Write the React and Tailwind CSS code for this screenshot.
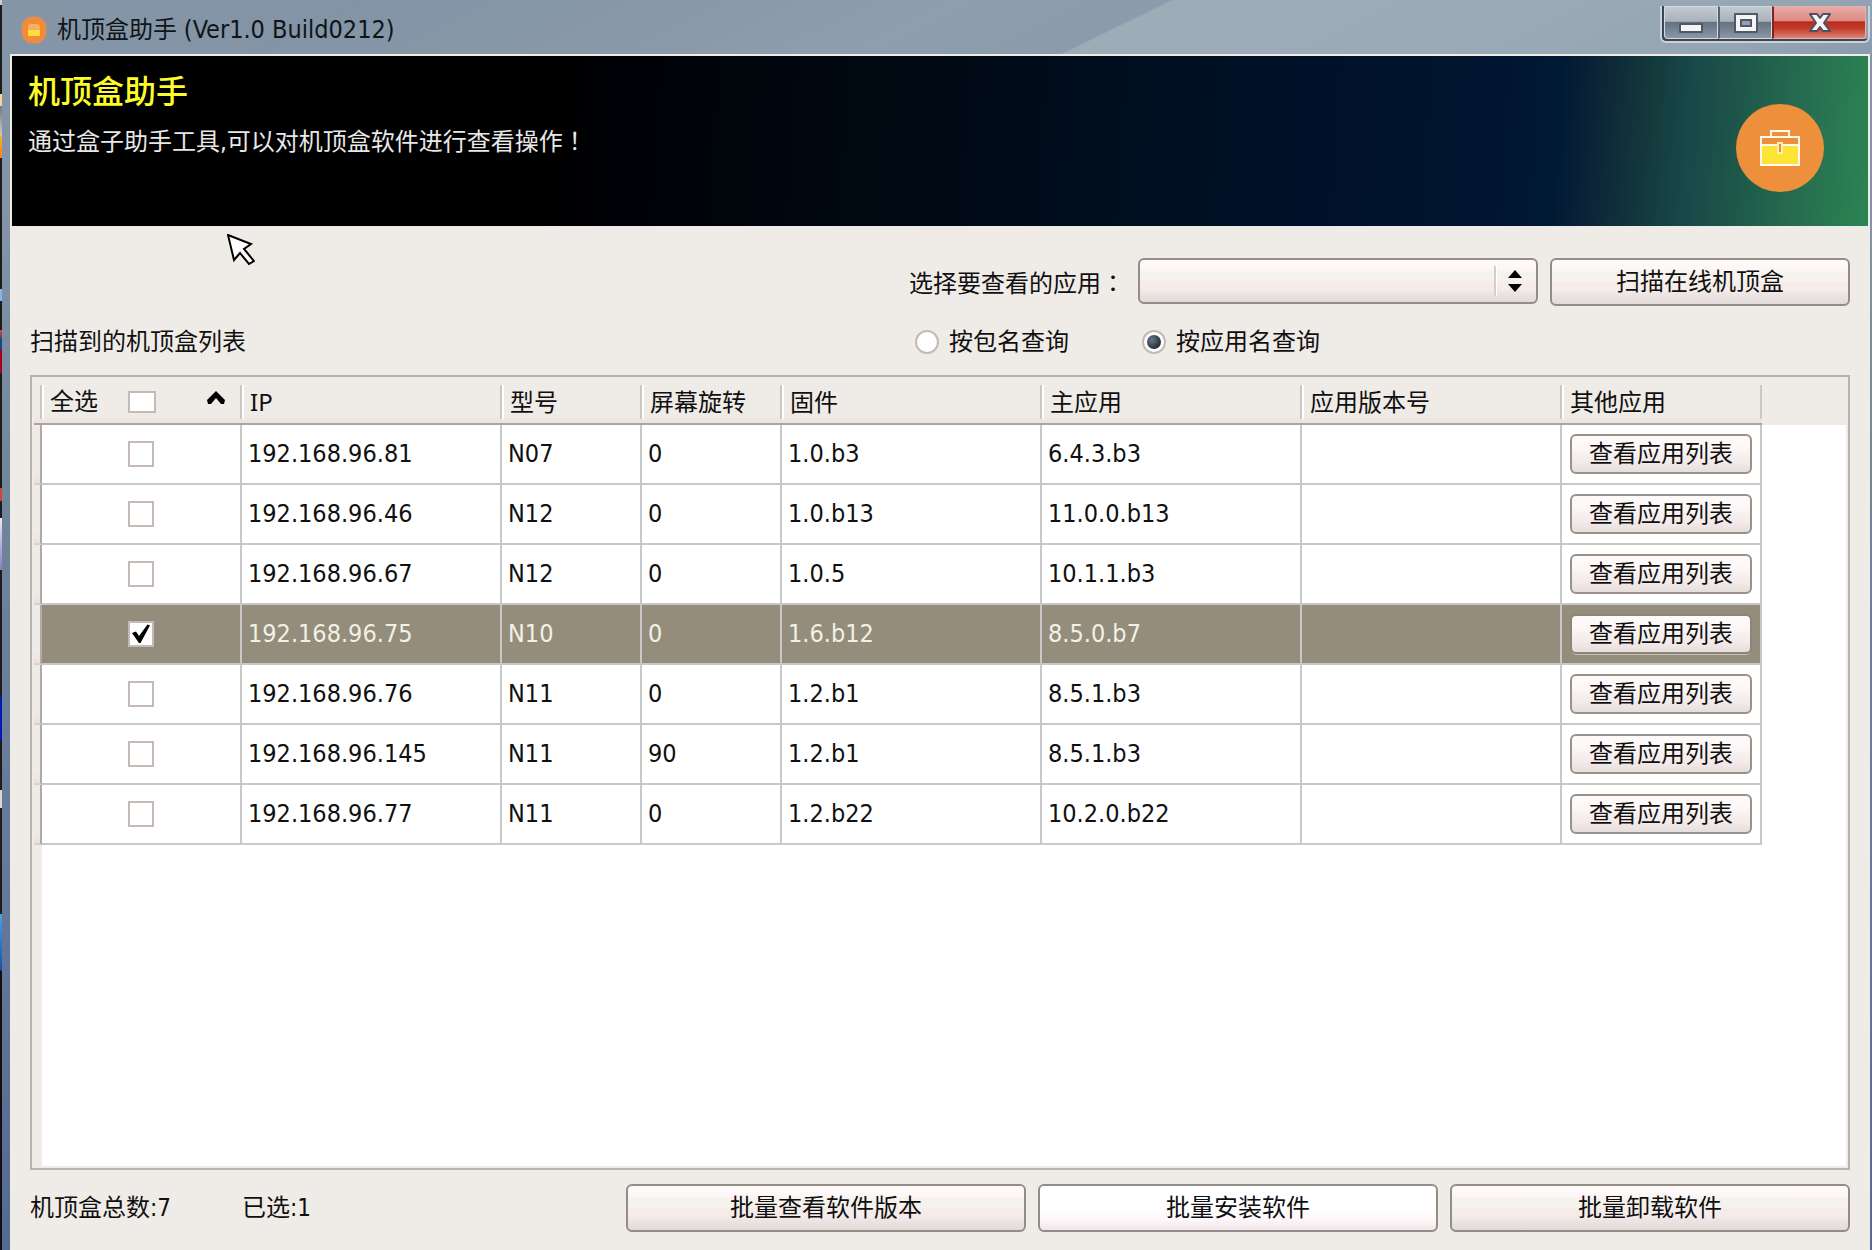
import { useState } from "react";

const BOXES = [
  { ip: "192.168.96.81", model: "N07", rotation: "0", firmware: "1.0.b3", app: "6.4.3.b3" },
  { ip: "192.168.96.46", model: "N12", rotation: "0", firmware: "1.0.b13", app: "11.0.0.b13" },
  { ip: "192.168.96.67", model: "N12", rotation: "0", firmware: "1.0.5", app: "10.1.1.b3" },
  { ip: "192.168.96.75", model: "N10", rotation: "0", firmware: "1.6.b12", app: "8.5.0.b7" },
  { ip: "192.168.96.76", model: "N11", rotation: "0", firmware: "1.2.b1", app: "8.5.1.b3" },
  { ip: "192.168.96.145", model: "N11", rotation: "90", firmware: "1.2.b1", app: "8.5.1.b3" },
  { ip: "192.168.96.77", model: "N11", rotation: "0", firmware: "1.2.b22", app: "10.2.0.b22" },
];

const COLUMNS = ["IP", "型号", "屏幕旋转", "固件", "主应用", "应用版本号", "其他应用"];

// Full-width punctuation centred in its em box
function Mark({ children }) {
  return <span className="font-['Noto_Sans_CJK_TC',sans-serif]">{children}</span>;
}

function PushButton({ children, className = "", hot = false }) {
  const face = hot
    ? "bg-[linear-gradient(#ffffff_0%,#ffffff_45%,#fdf8fa_75%,#f0e6ea_100%)]"
    : "bg-[linear-gradient(#fffbfb_0%,#fdf6f6_24%,#f6f2ec_28%,#f6f2ec_48%,#f6ecec_52%,#f5ebeb_70%,#ece7e4_76%,#e3dad8_100%)]";
  return (
    <button
      type="button"
      className={`flex h-12 items-center justify-center rounded-md border-2 border-[#928d86] text-2xl leading-8 ${face} ${className}`}
    >
      {children}
    </button>
  );
}

function TickBox({ label, checked, onChange, size }) {
  return (
    <span className="grid place-items-center">
      <input
        type="checkbox"
        aria-label={label}
        checked={checked}
        onChange={onChange}
        className={`col-start-1 row-start-1 appearance-none border-2 border-[#c6bab6] bg-white ${size}`}
      />
      {checked && (
        <svg viewBox="0 0 20 22" className="pointer-events-none col-start-1 row-start-1 h-[22px] w-5" aria-hidden="true">
          <path d="M1 10 L5 8.5 L8 13 L16.5 1.5 L19 2.5 L9.5 20 L8 20 Z" fill="#000" />
        </svg>
      )}
    </span>
  );
}

function TitleBar() {
  return (
    <header className="flex h-[54px] items-start justify-between bg-[linear-gradient(154deg,#8496a6_0px,#8294a6_160px,#8898a8_300px,#8f9eae_420px,#8b9bab_512px,#9eacb8_514px,#9aaab6_680px,#94a5b3_800px,#8c9cb0_860px)] pr-[2px]">
      <div className="flex items-center gap-2.5 pl-[19px] pt-3">
        <svg viewBox="0 0 26 28" className="h-7 w-[26px]" aria-hidden="true">
          <rect x="1" y="1" width="24" height="26" rx="10" fill="#f08c38" stroke="#d8905c" />
          <rect x="7" y="8" width="12" height="7" rx="3" fill="#f5b060" />
          <rect x="7" y="14" width="12" height="6" fill="#ffdc3c" />
        </svg>
        <h1 className="text-2xl leading-9 text-[#101418]">
          机顶盒助手 <span className="text-[25px]">(Ver1.0 Build0212)</span>
        </h1>
      </div>
      <div className="mt-[6px] flex h-[37px] rounded-b-md border-2 border-t-0 border-[#c9d2da] shadow-[inset_2px_-2px_0_#3d4650]">
        <button type="button" aria-label="最小化" className="m-[2px] mr-0 mt-0 flex w-[54px] items-center justify-center rounded-bl border border-[#d5dae0] bg-[linear-gradient(#c3c9d1_0%,#a9b1bb_46%,#66737f_50%,#8a96ab_100%)]">
          <svg viewBox="0 0 26 24" className="h-6 w-[26px]" aria-hidden="true">
            <rect x="1" y="12" width="24" height="10" rx="1" fill="#4e5868" />
            <rect x="3" y="14" width="20" height="6" fill="#f4f4f4" />
          </svg>
        </button>
        <button type="button" aria-label="最大化" className="mb-[2px] flex w-[54px] items-center justify-center border border-l-2 border-[#d5dae0] border-l-[#59636e] bg-[linear-gradient(#c3c9d1_0%,#a9b1bb_46%,#66737f_50%,#8a96ab_100%)]">
          <svg viewBox="0 0 26 24" className="h-6 w-[26px]" aria-hidden="true">
            <rect x="1" y="2" width="24" height="20" rx="1" fill="#4e5868" />
            <rect x="3" y="4" width="20" height="16" fill="#f4f4f4" />
            <rect x="7" y="8" width="12" height="8" fill="#4e5868" />
            <rect x="9" y="10" width="8" height="4" fill="#96a0b2" />
          </svg>
        </button>
        <button type="button" aria-label="关闭" className="mb-[2px] mr-[2px] flex w-[94px] items-center justify-center rounded-br border border-l-2 border-[#e6b0ac] border-l-[#7c2420] bg-[linear-gradient(#e9aaa6_0%,#dc8a84_44%,#b92c1c_48%,#c43c2c_70%,#dc8474_100%)]">
          <svg viewBox="0 0 26 24" className="h-6 w-[26px]" aria-hidden="true">
            <path d="M3 3 H10 L13 7 L16 3 H23 L17 12 L23 20 H16 L13 16 L10 20 H3 L9 12 Z" fill="#f6f4f4" stroke="#4e5060" strokeWidth="2" strokeLinejoin="round" />
          </svg>
        </button>
      </div>
    </header>
  );
}

function Banner() {
  return (
    <section className="flex h-[170px] items-center justify-between bg-[linear-gradient(94deg,#000000_0%,#000000_29%,#000107_33%,#000810_45%,#000c1a_55%,#001128_68%,#001530_80%,#001a34_83%,#0c2438_85%,#143a3c_88%,#18484a_90%,#1d5248_92%,#20604c_94%,#266c50_96%,#2c8452_100%)] pl-4 pr-11 text-white">
      <div className="self-start pt-3">
        <h2 className="text-[32px] font-medium leading-[48px] text-[#fcfc28]">机顶盒助手</h2>
        <p className="pt-[6px] text-2xl leading-9 text-[#e8e8e8]">
          通过盒子助手工具,可以对机顶盒软件进行查看操作<Mark>！</Mark>
        </p>
      </div>
      <svg viewBox="0 0 88 88" className="mt-[14px] size-[88px]" aria-hidden="true">
        <circle cx="44" cy="44" r="44" fill="#ee8f3c" />
        <path d="M35 33 V27 H53 V33" fill="none" stroke="#fff8ec" strokeWidth="2" />
        <rect x="25" y="41" width="38" height="20" fill="#ffe438" />
        <rect x="25" y="33" width="38" height="28" fill="none" stroke="#fff8ec" strokeWidth="2" />
        <path d="M25 41 H63" stroke="#fff8ec" strokeWidth="2" />
        <rect x="42" y="39" width="4" height="10" fill="#ee8f3c" stroke="#ffeeb0" strokeWidth="2" />
      </svg>
    </section>
  );
}

function Radio({ label, checked, onChange }) {
  return (
    <label className="flex items-center gap-2.5">
      <span className="grid place-items-center">
        <input
          type="radio"
          name="query"
          checked={checked}
          onChange={onChange}
          className="col-start-1 row-start-1 size-6 appearance-none rounded-full border-2 border-[#c4bab4] bg-white"
        />
        {checked && (
          <span className="pointer-events-none col-start-1 row-start-1 size-[14px] rounded-full bg-[radial-gradient(circle_at_35%_35%,#6a7884,#202a34_75%)]" />
        )}
      </span>
      {label}
    </label>
  );
}

function HeadCell({ children, last = false }) {
  return (
    <th
      scope="col"
      className="h-12 border-b-2 border-[#aaa5a0] bg-[linear-gradient(#efebe7_0%,#efebe7_80%,#ede2e0_100%)] p-0 pt-1 font-normal"
    >
      <div
        className={`-ml-[2px] flex h-[34px] items-center border-l-2 border-[#cbc7c3] shadow-[inset_2px_0_0_#ffffff] ${
          last ? "border-r-2" : ""
        }`}
      >
        {children}
      </div>
    </th>
  );
}

function BoxTable({ selected, toggle, toggleAll }) {
  const cell = "h-[60px] border-b-2 border-r-2 border-[#c8c8c8] py-0 pl-[6px] pr-0 text-[25px] leading-8";
  return (
    <div className="flex min-h-0 flex-1 flex-col border-2 border-[#b8b3af] bg-[#efebe7] p-[2px] pt-0">
      <div className="flex-1 bg-[linear-gradient(to_right,#efebe7_8px,#ffffff_8px)]">
        <div className="bg-[linear-gradient(#efebe7_48px,transparent_48px)]">
          <table className="w-[1728px] table-fixed border-separate border-spacing-0 text-left text-2xl leading-8">
            <colgroup>
              <col className="w-2" />
              <col className="w-[200px]" />
              <col className="w-[260px]" />
              <col className="w-[140px]" />
              <col className="w-[140px]" />
              <col className="w-[260px]" />
              <col className="w-[260px]" />
              <col className="w-[260px]" />
              <col className="w-[200px]" />
            </colgroup>
            <thead>
              <tr>
                <td className="border-b-2 border-[#aaa5a0] bg-[linear-gradient(#efebe7_80%,#ede2e0_100%)] p-0" />
                <HeadCell>
                  <span className="pl-2">全选</span>
                  <span className="pl-[30px]">
                    <TickBox label="全选" size="h-[22px] w-7" checked={selected.length === BOXES.length} onChange={toggleAll} />
                  </span>
                  <svg viewBox="0 0 20 14" className="mb-2 ml-auto mr-4 h-[14px] w-5" aria-hidden="true">
                    <path d="M1 9 L10 0 L19 9 L18 13 H15 L10 7 L5 13 H2 Z" fill="#000" />
                  </svg>
                </HeadCell>
                {COLUMNS.map((name, i) => (
                  <HeadCell key={name} last={i === COLUMNS.length - 1}>
                    <span className="pl-2 font-['Noto_Sans','Noto_Sans_CJK_SC',sans-serif]">{name}</span>
                  </HeadCell>
                ))}
              </tr>
            </thead>
            <tbody>
              {BOXES.map((box) => {
                const on = selected.includes(box.ip);
                return (
                  <tr key={box.ip} className={on ? "bg-[#948d7b] text-[#f1f1e6]" : "bg-white text-[#101010]"}>
                    <td className="border-b-2 border-r-2 border-b-[#d6d2ce] border-r-[#b0aaa6] bg-[linear-gradient(#efebe7_80%,#ece0de_100%)] p-0" />
                    <td className="h-[60px] border-b-2 border-r-2 border-[#c8c8c8] p-0">
                      <TickBox label={box.ip} size="size-[26px]" checked={on} onChange={() => toggle(box.ip)} />
                    </td>
                    <td className={cell}>{box.ip}</td>
                    <td className={cell}>{box.model}</td>
                    <td className={cell}>{box.rotation}</td>
                    <td className={cell}>{box.firmware}</td>
                    <td className={cell}>{box.app}</td>
                    <td className={cell} />
                    <td className="h-[60px] border-b-2 border-r-2 border-[#c8c8c8] p-0">
                      <button
                        type="button"
                        className={`mx-2 flex h-10 w-[182px] items-center justify-center rounded-md border-2 bg-[linear-gradient(#fffbfb_0%,#fdf6f6_35%,#f6f0ee_50%,#f4ebeb_70%,#e6dedb_100%)] text-2xl leading-8 text-[#101010] ${
                          on ? "border-[#8d8678] shadow-[0_2px_0_-1px_#c4bfb4]" : "border-[#98938a]"
                        }`}
                      >
                        查看应用列表
                      </button>
                    </td>
                  </tr>
                );
              })}
            </tbody>
          </table>
        </div>
      </div>
    </div>
  );
}

export default function App() {
  const [selected, setSelected] = useState(["192.168.96.75"]);
  const [mode, setMode] = useState("app");
  const toggle = (ip) => setSelected((s) => (s.includes(ip) ? s.filter((x) => x !== ip) : [...s, ip]));
  const toggleAll = () => setSelected((s) => (s.length === BOXES.length ? [] : BOXES.map((b) => b.ip)));

  return (
    <div className="relative flex min-h-screen bg-[#1c1c1c] font-['DejaVu_Sans_Condensed','Noto_Sans_CJK_SC',sans-serif] text-2xl leading-8 text-[#101010]">
      {/* Sliver of the desktop behind the window */}
      <div className="w-[2px] shrink-0 bg-[linear-gradient(#c8d0d0_5px,#1c1c1c_5px,#1c1c1c_94px,#f8d890_94px,#f8d890_106px,#707880_106px,#d0c8c0_135px,#f8b020_136px,#f88020_158px,#1c1c1c_158px,#1c1c1c_289px,#80b8e8_289px,#80b8e8_301px,#1c1c1c_301px,#1c1c1c_330px,#e84838_330px,#184880_340px,#184880_350px,#a80018_350px,#a80018_373px,#1c1c1c_373px,#1c1c1c_488px,#d84040_488px,#d84040_500px,#1c1c1c_502px,#1c1c1c_518px,#e8e8f8_518px,#8080c0_570px,#1c1c1c_570px,#1c1c1c_697px,#0818b0_697px,#0818b0_740px,#1c1c1c_740px,#1c1c1c_790px,#d8d8d0_790px,#d8d8d0_808px,#1c1c1c_808px,#1c1c1c_914px,#50a0e0_914px,#1850a8_970px,#101010_971px)]" />
      <main className="flex min-w-0 flex-1 flex-col bg-[linear-gradient(#8496a6_0px,#8294a6_220px,#6f8598_500px,#65789a_900px,#556a90_1250px)]">
        <TitleBar />
        <div className="ml-2 mr-[2px] flex flex-1 flex-col border-2 border-b-0 border-[#efebe7] bg-[#efebe7]">
          <Banner />
          <div className="flex flex-1 flex-col pb-[18px] pl-[18px] pr-[18px] pt-8">
            <div className="flex items-start justify-end">
              <label htmlFor="app-filter" className="pr-[13px] pt-2">
                选择要查看的应用<Mark>：</Mark>
              </label>
              <div className="relative mr-3 w-[400px]">
                <select
                  id="app-filter"
                  className="block h-[46px] w-full appearance-none rounded-md border-2 border-[#928d86] bg-[linear-gradient(#fffbfb_0%,#fdf6f6_24%,#f6f2ec_28%,#f6f2ec_48%,#f6ecec_52%,#f5ebeb_70%,#ece7e4_76%,#e3dad8_100%)] px-3"
                />
                <span className="pointer-events-none absolute inset-y-2 right-0 flex w-11 items-center justify-center border-l-2 border-[#d4cecb] pr-1 shadow-[inset_1px_0_0_#ffffff]">
                  <svg viewBox="0 0 16 24" className="h-6 w-4" aria-hidden="true">
                    <path d="M8 1 L15 9 H1 Z M8 23 L15 15 H1 Z" fill="#000" />
                  </svg>
                </span>
              </div>
              <PushButton className="w-[300px]">扫描在线机顶盒</PushButton>
            </div>
            <div className="flex h-[69px] items-center justify-between pt-[2px]">
              <h3>扫描到的机顶盒列表</h3>
              <div className="flex w-[935px] gap-[73px]">
                <Radio label="按包名查询" checked={mode === "package"} onChange={() => setMode("package")} />
                <Radio label="按应用名查询" checked={mode === "app"} onChange={() => setMode("app")} />
              </div>
            </div>
            <BoxTable selected={selected} toggle={toggle} toggleAll={toggleAll} />
            <footer className="flex items-center pt-[14px]">
              <span className="w-[212px]">机顶盒总数:{BOXES.length}</span>
              <span>已选:{selected.length}</span>
              <div className="ml-auto flex gap-3">
                <PushButton className="w-[400px]">批量查看软件版本</PushButton>
                <PushButton className="w-[400px]" hot>批量安装软件</PushButton>
                <PushButton className="w-[400px]">批量卸载软件</PushButton>
              </div>
            </footer>
          </div>
        </div>
      </main>
      {/* Mouse pointer */}
      <svg viewBox="0 0 28 32" className="pointer-events-none absolute left-[227px] top-[234px] h-8 w-7" aria-hidden="true">
        <path d="M1 1 L24 10 L17 15 L27 27 L22 30 L13 19 L7 26 Z" fill="#fff" stroke="#000" strokeWidth="2" />
      </svg>
    </div>
  );
}
